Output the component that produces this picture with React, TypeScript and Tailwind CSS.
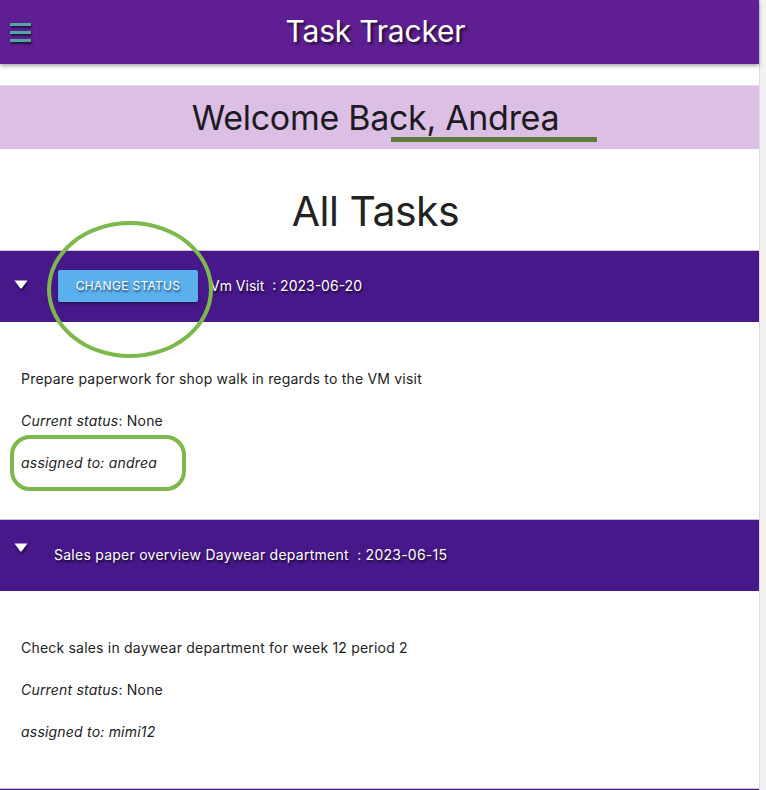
import React from "react";

const font = { fontFamily: "Inter, 'Noto Sans', sans-serif" };

function Triangle() {
  return (
    <svg width="14" height="9" viewBox="0 0 14 9" className="drop-shadow-[1px_2px_1px_rgba(0,0,0,0.6)]">
      <path d="M0.5 0.5 H13.5 L8 8 Q7 9 6 8 Z" fill="#ffffff" />
    </svg>
  );
}

function TaskBar({ children }: { children: React.ReactNode }) {
  return (
    <div className="h-[72px] bg-[#47188a] border-t border-[#c9c3d6] flex items-center relative">
      {children}
    </div>
  );
}

function TaskBody({ desc, user, circle }: { desc: string; user: string; circle?: boolean }) {
  return (
    <div className="bg-white pl-[21px] text-[14px] tracking-[0.2px] text-[#222] flex flex-col h-[197px] pt-[46px] gap-[20px] leading-[22px]">
      <div>{desc}</div>
      <div>
        <span className="italic">Current status</span>: None
      </div>
      <div className="relative">
        <span className="italic">assigned to: {user}</span>
        {circle && (
          <div className="absolute left-[-11px] top-[-17px] w-[176px] h-[56px] rounded-[20px] border-[4px] border-[#7cb84c]" />
        )}
      </div>
    </div>
  );
}

export default function App() {
  return (
    <div className="w-[766px] h-[790px] overflow-hidden bg-[#f1f1f1] flex" style={font}>
      <div className="w-[760px] bg-white border-r border-[#dcdcdc] relative">
        <header className="h-[64px] bg-[#5f1f93] flex items-center justify-center pr-[8px] relative shadow-[0_2px_4px_rgba(0,0,0,0.35)] z-10">
          <div className="absolute left-[10px] top-[23px] flex flex-col gap-[5px]">
            <div className="w-[21px] h-[3px] bg-[#4fa89e] shadow-[1px_2px_2px_rgba(0,0,0,0.6)]" />
            <div className="w-[21px] h-[3px] bg-[#4fa89e] shadow-[1px_2px_2px_rgba(0,0,0,0.6)]" />
            <div className="w-[21px] h-[3px] bg-[#4fa89e] shadow-[1px_2px_2px_rgba(0,0,0,0.6)]" />
          </div>
          <h1 className="text-white text-[30px] tracking-[-0.2px] [text-shadow:2px_2px_3px_rgba(0,0,0,0.7)] mt-[-1px]">
            Task Tracker
          </h1>
        </header>
        <div className="h-[21px]" />
        <div className="h-[64px] bg-[#dbbfe4] border-t border-[#e6d6ec] flex items-center justify-center pr-[8px] relative">
          <div className="text-[34px] text-[#1e1a22] tracking-[-0.3px] mt-[-1px]">Welcome Back, Andrea</div>
          <div className="absolute left-[391px] top-[51px] w-[206px] h-[5px] bg-[#5e7d3a]" />
        </div>
        <div className="h-[101px] flex items-center justify-center pr-[8px]">
          <div className="text-[41px] text-[#222] tracking-[-0.5px] mt-[24px]">All Tasks</div>
        </div>
        <TaskBar>
          <div className="absolute left-[14px] top-[29px]">
            <Triangle />
          </div>
          <button className="absolute left-[58px] top-[19px] w-[140px] h-[32px] bg-[#5ab0ee] rounded-[2px] shadow-[0_2px_3px_rgba(0,0,0,0.35)] text-white text-[12px] tracking-[0.3px] [text-shadow:1px_2px_2px_rgba(0,0,0,0.6)]">
            CHANGE STATUS
          </button>
          <div className="absolute left-[210px] top-[24px] text-white text-[14px] [text-shadow:1px_2px_2px_rgba(0,0,0,0.7)] whitespace-pre">
            Vm Visit  : 2023-06-20
          </div>
          <div className="absolute left-[47px] top-[-30px] w-[166px] h-[137px] rounded-[50%] border-[4px] border-[#7cb84c] z-10" />
        </TaskBar>
        <TaskBody desc="Prepare paperwork for shop walk in regards to the VM visit" user="andrea" circle />
        <TaskBar>
          <div className="absolute left-[14px] top-[23px]">
            <Triangle />
          </div>
          <div className="absolute left-[54px] top-[24px] text-white text-[14px] tracking-[0.25px] [text-shadow:1px_2px_2px_rgba(0,0,0,0.7)] whitespace-pre">
            Sales paper overview Daywear department  : 2023-06-15
          </div>
        </TaskBar>
        <TaskBody desc="Check sales in daywear department for week 12 period 2" user="mimi12" />
        <div className="h-[10px] bg-[#47188a] border-t border-[#c9c3d6]" />
      </div>
    </div>
  );
}
